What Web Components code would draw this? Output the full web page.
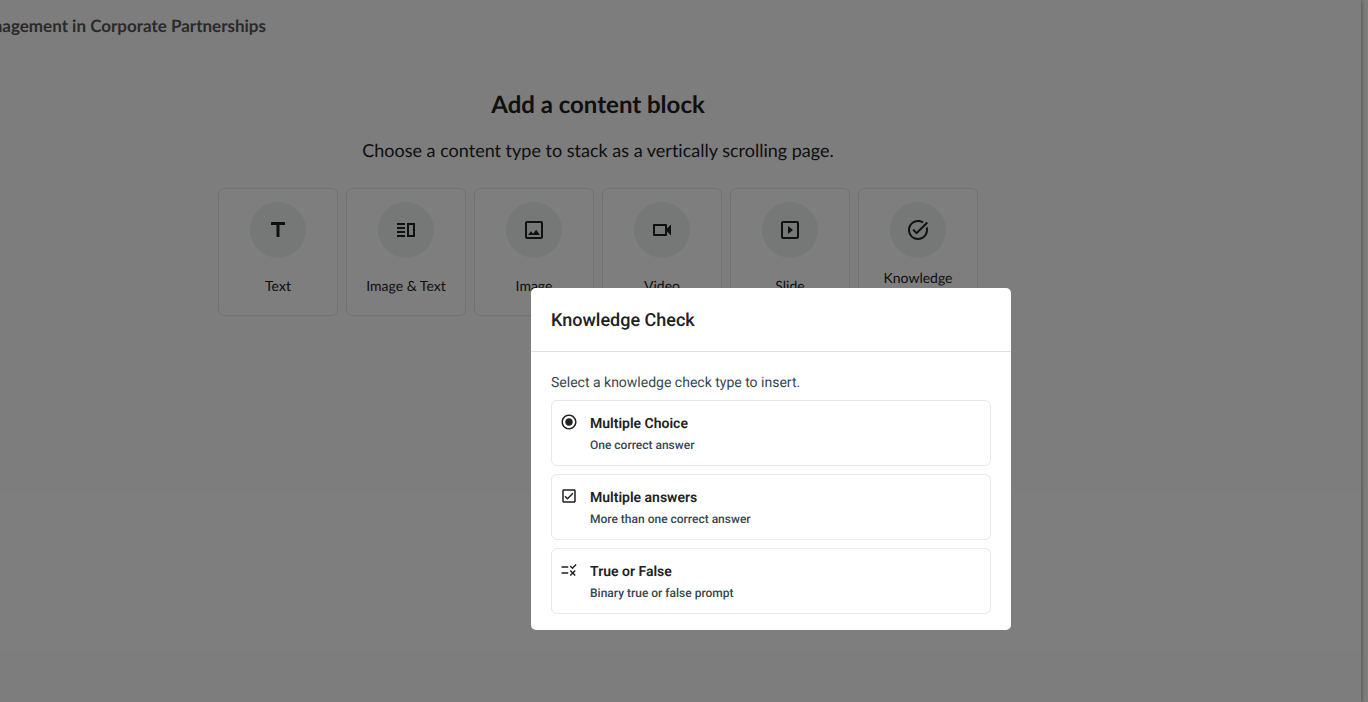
<!DOCTYPE html>
<html lang="en">
<head>
<meta charset="utf-8">
<meta name="viewport" content="width=device-width, initial-scale=1">
<title>Add a content block</title>
<style>
    body {
        margin: 0;
        min-height: 100vh;
        overflow: hidden;
        background: #fefdfb;
        font-family: Lato, sans-serif;
        font-variant-ligatures: none;
        text-rendering: geometricPrecision;
        color: #212121;
    }
</style>
</head>
<body>
<course-editor heading="Change Management in Corporate Partnerships">
    <block-picker>
        <block-card icon="text">Text</block-card>
        <block-card icon="split">Image &amp; Text</block-card>
        <block-card icon="image">Image</block-card>
        <block-card icon="video">Video</block-card>
        <block-card icon="slide">Slide</block-card>
        <block-card icon="task">Knowledge Check</block-card>
    </block-picker>
</course-editor>
<modal-dialog heading="Knowledge Check">
    <span slot="intro">Select a knowledge check type to insert.</span>
    <check-option icon="radio" heading="Multiple Choice">One correct answer</check-option>
    <check-option icon="checkbox" heading="Multiple answers">More than one correct answer</check-option>
    <check-option icon="rule" heading="True or False">Binary true or false prompt</check-option>
</modal-dialog>

<script>
const ICONS = {
    text: 'M5 4v3h5.5v12h3V7H19V4z',
    split: 'M19 7v10h-4V7h4m2-2h-8v14h8V5zM11 13H3v2h8v-2zm0 4H3v2h8v-2zm0-8H3v2h8V9zm0-4H3v2h8V5z',
    image: 'M19 5v14H5V5h14m0-2H5c-1.1 0-2 .9-2 2v14c0 1.1.9 2 2 2h14c1.1 0 2-.9 2-2V5c0-1.1-.9-2-2-2zm-4.86 8.86l-3 3.87L9 13.14 6 17h12l-3.86-5.14z',
    video: 'M15 8v8H5V8h10m1-2H4c-.55 0-1 .45-1 1v10c0 .55.45 1 1 1h12c.55 0 1-.45 1-1v-3.5l4 4v-11l-4 4V7c0-.55-.45-1-1-1z',
    slide: 'M10 8v8l5-4-5-4zm9-5H5c-1.1 0-2 .9-2 2v14c0 1.1.9 2 2 2h14c1.1 0 2-.9 2-2V5c0-1.1-.9-2-2-2zm0 16H5V5h14v14z',
    task: 'M22 5.18L10.59 16.6l-4.24-4.24 1.41-1.41 2.83 2.83 10-10L22 5.18zm-2.21 5.04c.13.57.21 1.17.21 1.78 0 4.42-3.58 8-8 8s-8-3.58-8-8 3.58-8 8-8c1.58 0 3.04.46 4.28 1.25l1.44-1.44C16.1 2.67 14.13 2 12 2 6.48 2 2 6.48 2 12s4.48 10 10 10 10-4.48 10-10c0-1.19-.22-2.33-.6-3.39l-1.61 1.61z',
    radio: 'M12 7c-2.76 0-5 2.24-5 5s2.24 5 5 5 5-2.24 5-5-2.24-5-5-5zm0-5C6.48 2 2 6.48 2 12s4.48 10 10 10 10-4.48 10-10S17.52 2 12 2zm0 18c-4.42 0-8-3.58-8-8s3.58-8 8-8 8 3.58 8 8-3.58 8-8 8z',
    checkbox: 'M19 3H5c-1.1 0-2 .9-2 2v14c0 1.1.9 2 2 2h14c1.1 0 2-.9 2-2V5c0-1.1-.9-2-2-2zm0 16H5V5h14v14zM17.99 9l-1.41-1.42-6.59 6.59-2.58-2.57-1.42 1.41 4 3.99z',
    rule: 'M16.54 11L13 7.46l1.41-1.41 2.12 2.12 4.24-4.24 1.41 1.41L16.54 11zM11 7H2v2h9V7zm10 6.41L19.59 12 17 14.59 14.41 12 13 13.41 15.59 16 13 18.59 14.41 20 17 17.41 19.59 20 21 18.59 18.41 16 21 13.41zM11 15H2v2h9v-2z'
};

const icon = (name) => `<svg viewBox="0 0 24 24" aria-hidden="true"><path d="${ICONS[name]}"/></svg>`;

class CourseEditor extends HTMLElement {
    constructor() {
        super();
        this.attachShadow({ mode: 'open' });
    }

    connectedCallback() {
        // the sheet runs past the left side of the window
        this.shadowRoot.innerHTML = `
            <style>
                :host {
                    display: flex;
                    flex-direction: column;
                    min-height: 100vh;
                    margin-left: -165px;
                    margin-right: 7px;
                    background: #fafafa;
                    box-shadow: 0 0 5px rgba(0, 0, 0, 0.5);
                }
                header {
                    width: 431px;
                    padding: 14px 0;
                    text-align: right;
                    white-space: nowrap;
                }
                h1 {
                    margin: 0;
                    font-size: 17px;
                    line-height: 24px;
                    font-weight: 700;
                    color: #555;
                }
                main {
                    box-sizing: border-box;
                    min-height: 438px;
                    padding-top: 36px;
                }
                .next {
                    height: 164px;
                    background: #fdfdfd;
                }
            </style>
            <header><h1>${this.getAttribute('heading')}</h1></header>
            <main><slot></slot></main>
            <div class="next"></div>
        `;
    }
}

class BlockPicker extends HTMLElement {
    constructor() {
        super();
        this.attachShadow({ mode: 'open' });
    }

    connectedCallback() {
        this.shadowRoot.innerHTML = `
            <style>
                :host {
                    display: block;
                    text-align: center;
                }
                h2 {
                    margin: 0 0 14px;
                    font-size: 24px;
                    line-height: 34px;
                    font-weight: 700;
                }
                p {
                    margin: 0 0 24px;
                    font-size: 18px;
                    line-height: 28px;
                }
                .cards {
                    display: flex;
                    justify-content: center;
                    gap: 8px;
                }
            </style>
            <h2>Add a content block</h2>
            <p>Choose a content type to stack as a vertically scrolling page.</p>
            <div class="cards"><slot></slot></div>
        `;
    }
}

class BlockCard extends HTMLElement {
    constructor() {
        super();
        this.attachShadow({ mode: 'open' });
    }

    connectedCallback() {
        this.shadowRoot.innerHTML = `
            <style>
                :host {
                    display: block;
                }
                button {
                    display: flex;
                    flex-direction: column;
                    align-items: center;
                    gap: 12px;
                    box-sizing: border-box;
                    width: 120px;
                    height: 128px;
                    padding: 13px 16px;
                    border: 1px solid #e4e4e4;
                    border-radius: 6px;
                    background: #fdfdfd;
                    font: 14px/16px Lato, sans-serif;
                    text-rendering: inherit;
                    color: #212121;
                    cursor: pointer;
                }
                .icon {
                    display: grid;
                    place-items: center;
                    width: 56px;
                    height: 56px;
                    border-radius: 50%;
                    background: #ecf0ee;
                }
                svg {
                    width: 24px;
                    height: 24px;
                    fill: #212121;
                }
                .label {
                    display: grid;
                    place-items: center;
                    height: 32px;
                }
            </style>
            <button type="button">
                <span class="icon">${icon(this.getAttribute('icon'))}</span>
                <span class="label"><span><slot></slot></span></span>
            </button>
        `;
    }
}

class ModalDialog extends HTMLElement {
    constructor() {
        super();
        this.attachShadow({ mode: 'open' });
    }

    connectedCallback() {
        this.shadowRoot.innerHTML = `
            <style>
                :host {
                    position: fixed;
                    inset: 0;
                    display: flex;
                    justify-content: center;
                    align-items: flex-start;
                    padding: 288px 0 0 174px;
                    background: rgba(0, 0, 0, 0.5);
                    font-family: Roboto, sans-serif;
                }
                section {
                    width: 480px;
                    border-radius: 5px;
                    background: #fff;
                }
                h2 {
                    margin: 0;
                    padding: 21px 20px 18px;
                    border-bottom: 1px solid #e0e0e0;
                    font-size: 18px;
                    line-height: 24px;
                    font-weight: 500;
                }
                .body {
                    display: flex;
                    flex-direction: column;
                    gap: 8px;
                    padding: 22px 20px 16px;
                }
                p {
                    margin: 0;
                    font-size: 14px;
                    line-height: 18px;
                    color: #37474f;
                }
            </style>
            <section role="dialog" aria-modal="true" aria-labelledby="title">
                <h2 id="title">${this.getAttribute('heading')}</h2>
                <div class="body">
                    <p><slot name="intro"></slot></p>
                    <slot></slot>
                </div>
            </section>
        `;
    }
}

class CheckOption extends HTMLElement {
    constructor() {
        super();
        this.attachShadow({ mode: 'open' });
    }

    connectedCallback() {
        this.shadowRoot.innerHTML = `
            <style>
                :host {
                    display: block;
                }
                button {
                    display: flex;
                    align-items: flex-start;
                    gap: 12px;
                    width: 100%;
                    padding: 12px 8px;
                    border: 1px solid #e8e8e8;
                    border-radius: 6px;
                    background: #fff;
                    font-family: Roboto, sans-serif;
                    text-rendering: inherit;
                    text-align: left;
                    cursor: pointer;
                }
                svg {
                    width: 18px;
                    height: 18px;
                    fill: #212121;
                }
                .text {
                    display: flex;
                    flex-direction: column;
                    gap: 2px;
                }
                strong {
                    font-size: 14px;
                    line-height: 22px;
                    font-weight: 600;
                    color: #212121;
                }
                small {
                    font-size: 12px;
                    line-height: 16px;
                    font-weight: 500;
                    color: #37474f;
                }
            </style>
            <button type="button">
                ${icon(this.getAttribute('icon'))}
                <span class="text">
                    <strong>${this.getAttribute('heading')}</strong>
                    <small><slot></slot></small>
                </span>
            </button>
        `;
    }
}

customElements.define('course-editor', CourseEditor);
customElements.define('block-picker', BlockPicker);
customElements.define('block-card', BlockCard);
customElements.define('modal-dialog', ModalDialog);
customElements.define('check-option', CheckOption);
</script>
</body>
</html>
